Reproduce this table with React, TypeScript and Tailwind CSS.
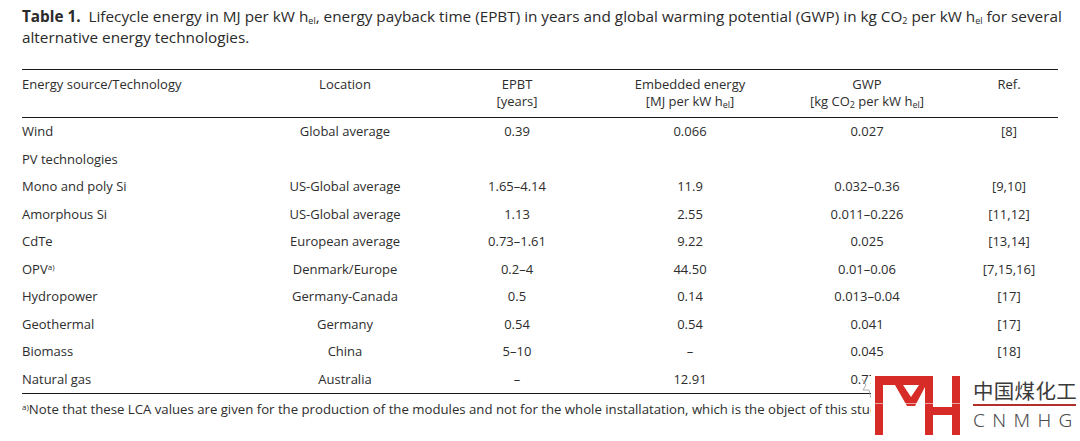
import React from "react";

const rows = [
  { name: "Wind", loc: "Global average", epbt: "0.39", emb: "0.066", gwp: "0.027", ref: "[8]" },
  { name: "PV technologies", loc: "", epbt: "", emb: "", gwp: "", ref: "" },
  { name: "Mono and poly Si", loc: "US-Global average", epbt: "1.65–4.14", emb: "11.9", gwp: "0.032–0.36", ref: "[9,10]" },
  { name: "Amorphous Si", loc: "US-Global average", epbt: "1.13", emb: "2.55", gwp: "0.011–0.226", ref: "[11,12]" },
  { name: "CdTe", loc: "European average", epbt: "0.73–1.61", emb: "9.22", gwp: "0.025", ref: "[13,14]" },
  { name: "OPV", sup: "a)", loc: "Denmark/Europe", epbt: "0.2–4", emb: "44.50", gwp: "0.01–0.06", ref: "[7,15,16]" },
  { name: "Hydropower", loc: "Germany-Canada", epbt: "0.5", emb: "0.14", gwp: "0.013–0.04", ref: "[17]" },
  { name: "Geothermal", loc: "Germany", epbt: "0.54", emb: "0.54", gwp: "0.041", ref: "[17]" },
  { name: "Biomass", loc: "China", epbt: "5–10", emb: "–", gwp: "0.045", ref: "[18]" },
  { name: "Natural gas", loc: "Australia", epbt: "–", emb: "12.91", gwp: "0.779", ref: "[19]" },
];

const cols = "grid grid-cols-[234px_178px_166px_180px_174px_104px]";

function Sub({ children }: { children: React.ReactNode }) {
  return <sub className="text-[9px]">{children}</sub>;
}

function Logo() {
  return (
    <div className="absolute left-[871px] top-[375px] w-[209px] h-[66px] bg-white flex items-start gap-[12px] pl-[4px]">
      <svg width="86" height="60" viewBox="0 0 86 60" className="block shrink-0 mt-[1px]">
        <g fill="#d62b26">
          <rect x="0" y="0" width="8" height="59" />
          <rect x="0" y="0" width="58" height="9" />
          <polygon points="20,9 28,9 36,21 44,9 51,9 40,30 32,30" />
          <rect x="50" y="0" width="8" height="59" />
          <rect x="77" y="0" width="8" height="59" />
          <rect x="50" y="31" width="35" height="8" />
        </g>
        <rect x="0" y="27" width="86" height="0.8" fill="#ffffff" opacity="0.7" />
      </svg>
      <div className="flex flex-col pt-[2px]">
        <div className="text-[20.5px] leading-[26px] text-[#3b3b3b] tracking-[0.3px] font-['Noto_Sans_CJK_SC',sans-serif]">
          中国煤化工
        </div>
        <div className="h-[1.5px] w-[103px] bg-[#b2302c] mt-[1px]" />
        <div className="text-[19px] leading-[24px] text-[#4a4a4a] tracking-[7.4px] font-light font-['Noto_Sans','Liberation_Sans',sans-serif] mt-[2px]">
          CNMHG
        </div>
      </div>
    </div>
  );
}

export default function App() {
  return (
    <div className="relative w-[1080px] h-[441px] bg-white overflow-hidden text-[#2d2d2d] font-['Open_Sans',sans-serif]">
      {/* Caption */}
      <div className="pl-[22px] pt-[6px] text-[15.3px] leading-[21px] text-[#2a2a2a] whitespace-nowrap">
        <span className="font-bold">Table 1.</span>&nbsp; Lifecycle energy in MJ per kW h<Sub>el</Sub>, energy payback
        time (EPBT) in years and global warming potential (GWP) in kg CO<Sub>2</Sub> per kW h<Sub>el</Sub> for several
        <br />
        alternative energy technologies.
      </div>

      {/* Table */}
      <div className="ml-[22px] mt-[21px] w-[1036px] text-[13px]">
        <div className={`${cols} border-t border-b border-[#1a1a1a] pt-[6px] pb-[7px] leading-[17px]`}>
          <div>Energy source/Technology</div>
          <div className="text-center">Location</div>
          <div className="text-center">
            EPBT
            <br />
            [years]
          </div>
          <div className="text-center">
            Embedded energy
            <br />
            [MJ per kW h<Sub>el</Sub>]
          </div>
          <div className="text-center">
            GWP
            <br />
            [kg CO<Sub>2</Sub> per kW h<Sub>el</Sub>]
          </div>
          <div className="text-center pl-[6px]">Ref.</div>
        </div>
        <div className="border-b border-[#1a1a1a]">
          {rows.map((r) => (
            <div key={r.name} className={`${cols} h-[27.5px] items-center`}>
              <div>
                {r.name}
                {r.sup && <sup className="text-[8px]">{r.sup}</sup>}
              </div>
              <div className="text-center">{r.loc}</div>
              <div className="text-center">{r.epbt}</div>
              <div className="text-center">{r.emb}</div>
              <div className="text-center">{r.gwp}</div>
              <div className="text-center pl-[6px]">{r.ref}</div>
            </div>
          ))}
        </div>
        <div className="mt-[5px] leading-[20px] text-[13.2px] whitespace-nowrap">
          <sup className="text-[8px]">a)</sup>Note that these LCA values are given for the production of the modules and
          not for the whole installatation, which is the object of this study.
        </div>
      </div>

      {/* cursor artifact */}
      <svg className="absolute left-[860px] top-[376px]" width="14" height="24" viewBox="0 0 14 24">
        <path d="M2 3 L6 9 L3 14 L9 14 L11 22" fill="none" stroke="#9a9a9a" strokeWidth="0.8" />
      </svg>

      <Logo />
    </div>
  );
}
